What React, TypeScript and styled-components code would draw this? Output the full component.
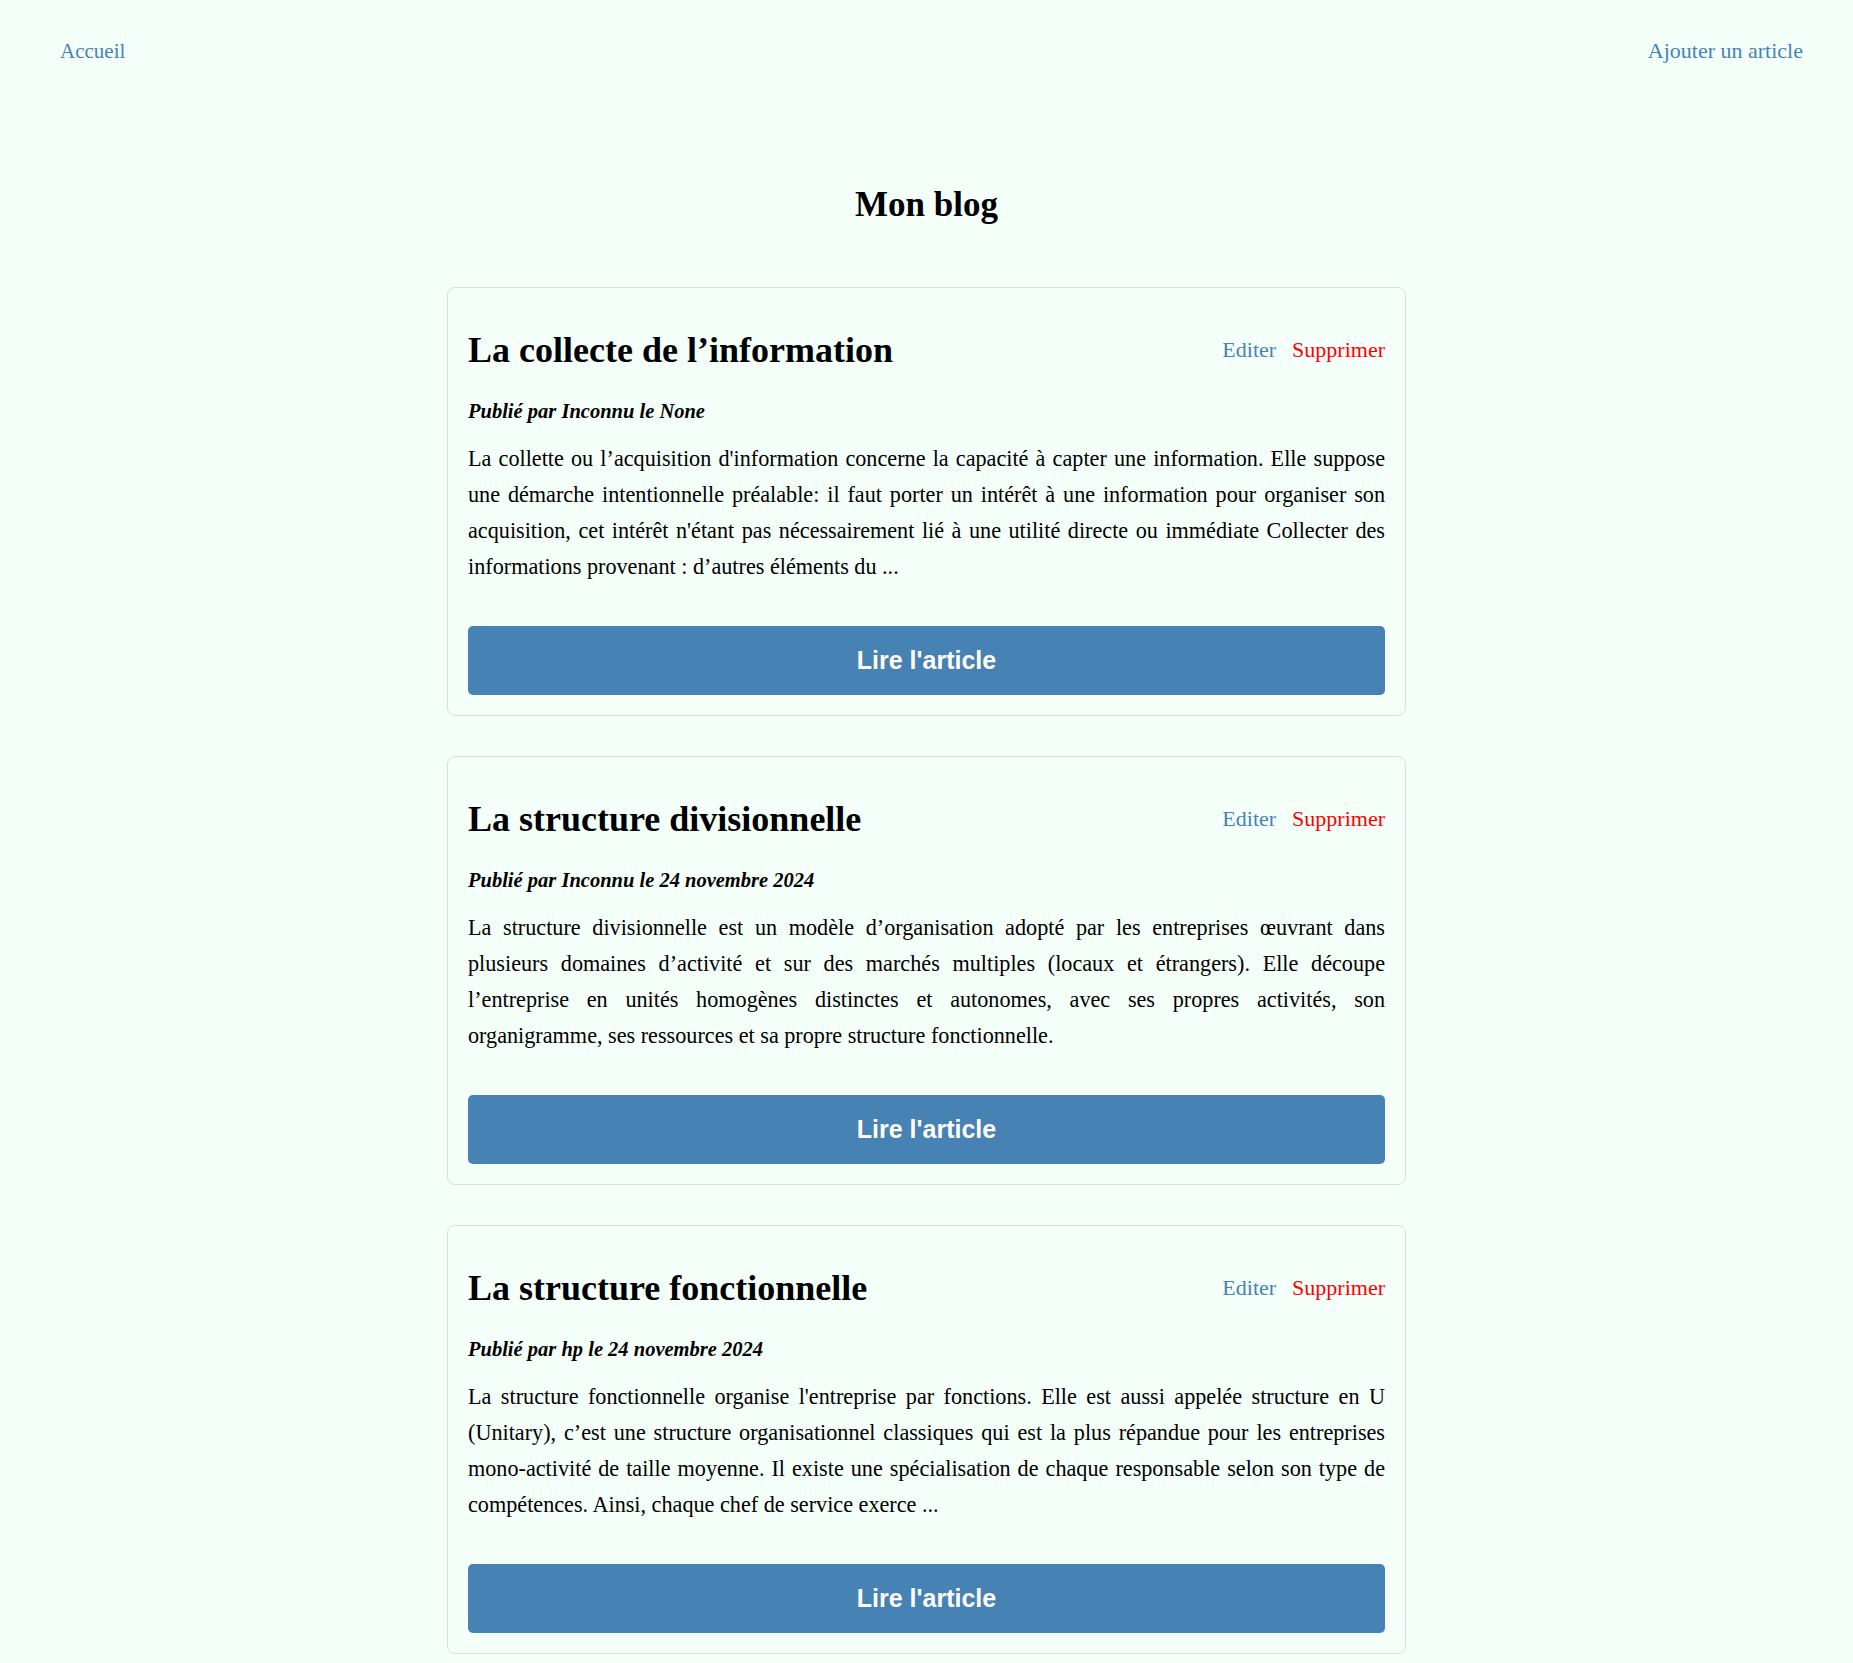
import styled, { createGlobalStyle } from 'styled-components';

type Post = {
  id: number;
  title: string;
  author: string;
  date: string;
  excerpt: string;
};

const posts: Post[] = [
  {
    id: 1,
    title: 'La collecte de l’information',
    author: 'Inconnu',
    date: 'None',
    excerpt:
      "La collette ou l’acquisition d'information concerne la capacité à capter une information. Elle suppose une démarche intentionnelle préalable: il faut porter un intérêt à une information pour organiser son acquisition, cet intérêt n'étant pas nécessairement lié à une utilité directe ou immédiate Collecter des informations provenant : d’autres éléments du ...",
  },
  {
    id: 2,
    title: 'La structure divisionnelle',
    author: 'Inconnu',
    date: '24 novembre 2024',
    excerpt:
      'La structure divisionnelle est un modèle d’organisation adopté par les entreprises œuvrant dans plusieurs domaines d’activité et sur des marchés multiples (locaux et étrangers). Elle découpe l’entreprise en unités homogènes distinctes et autonomes, avec ses propres activités, son organigramme, ses ressources et sa propre structure fonctionnelle.',
  },
  {
    id: 3,
    title: 'La structure fonctionnelle',
    author: 'hp',
    date: '24 novembre 2024',
    excerpt:
      "La structure fonctionnelle organise l'entreprise par fonctions. Elle est aussi appelée structure en U (Unitary), c’est une structure organisationnel classiques qui est la plus répandue pour les entreprises mono-activité de taille moyenne. Il existe une spécialisation de chaque responsable selon son type de compétences. Ainsi, chaque chef de service exerce ...",
  },
];

const GlobalStyle = createGlobalStyle`
  body {
    margin: 0;
    background: #f5fffa;
    color: #000;
    font-family: "Liberation Serif", "Times New Roman", serif;
  }
`;

const Nav = styled.nav`
  display: flex;
  justify-content: space-between;
  align-items: baseline;
  padding: 38px 50px 0 60px;
`;

const NavLink = styled.a<{ $size?: number }>`
  font-size: ${({ $size }) => $size ?? 22}px;
  line-height: 25px;
  color: #4682b4;
  text-decoration: none;
  cursor: pointer;
`;

const Main = styled.main`
  width: 959px;
  margin: 0 auto;
  padding-bottom: 40px;
`;

const PageTitle = styled.h1`
  margin: 121px 0 62px;
  font-size: 35px;
  line-height: 40px;
  font-weight: 700;
  text-align: center;
`;

const List = styled.div`
  display: flex;
  flex-direction: column;
  gap: 40px;
`;

const Card = styled.article`
  border: 1px solid #dddddd;
  border-radius: 8px;
  padding: 20px;
`;

const Header = styled.div`
  display: flex;
  justify-content: space-between;
  align-items: center;
  margin-top: 20px;
`;

const Title = styled.h2`
  margin: 0;
  font-size: 36px;
  line-height: 44px;
  font-weight: 700;
`;

const Actions = styled.div`
  display: flex;
  gap: 16px;
`;

const Action = styled.a<{ $danger?: boolean }>`
  font-size: 22px;
  color: ${({ $danger }) => ($danger ? '#ff0000' : '#4682b4')};
  text-decoration: none;
  cursor: pointer;
`;

const Meta = styled.p`
  margin: 27px 0 0;
  font-size: 20.5px;
  line-height: 24px;
  font-weight: 700;
  font-style: italic;
`;

const Excerpt = styled.p`
  margin: 18px 0 0;
  font-size: 22.2px;
  line-height: 36px;
  text-align: justify;
`;

const ReadButton = styled.button`
  display: block;
  width: 100%;
  margin-top: 41px;
  padding: 20px;
  border: none;
  border-radius: 5px;
  background: #4682b4;
  color: #fff;
  font-family: "Liberation Sans", Arial, sans-serif;
  font-size: 25px;
  line-height: 29px;
  font-weight: 700;
  cursor: pointer;
`;

function PostCard({ post }: { post: Post }) {
  return (
    <Card>
      <Header>
        <Title>{post.title}</Title>
        <Actions>
          <Action>Editer</Action>
          <Action $danger>Supprimer</Action>
        </Actions>
      </Header>
      <Meta>
        Publié par {post.author} le {post.date}
      </Meta>
      <Excerpt>{post.excerpt}</Excerpt>
      <ReadButton type="button">Lire l'article</ReadButton>
    </Card>
  );
}

export default function App() {
  return (
    <>
      <GlobalStyle />
      <Nav>
        <NavLink $size={21}>Accueil</NavLink>
        <NavLink>Ajouter un article</NavLink>
      </Nav>
      <Main>
        <PageTitle>Mon blog</PageTitle>
        <List>
          {posts.map((post) => (
            <PostCard key={post.id} post={post} />
          ))}
        </List>
      </Main>
    </>
  );
}
